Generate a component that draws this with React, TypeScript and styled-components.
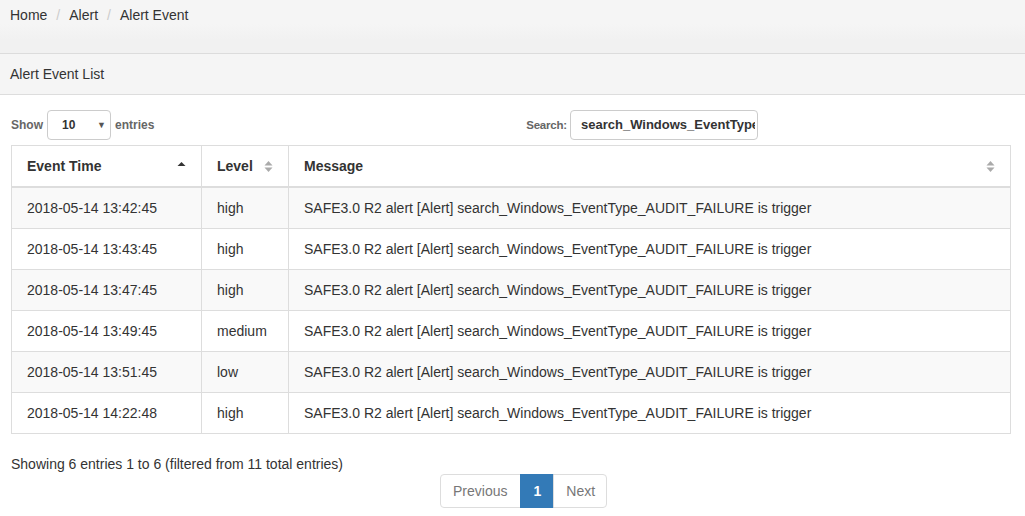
import React from "react";
import styled, { createGlobalStyle } from "styled-components";

const Global = createGlobalStyle`
  html, body { margin: 0; padding: 0; background: #fff; }
  body { font-family: "Liberation Sans", Arial, sans-serif; font-size: 14px; color: #333; line-height: 20px; }
  * { box-sizing: border-box; }
`;

const Top = styled.div`
  height: 54px;
  background: linear-gradient(#f5f5f5 0, #f5f5f5 24px, #f1f1f1 40px, #f1f1f1 100%);
  border-bottom: 1px solid #dcdcdc;
`;

const Crumbs = styled.ol`
  list-style: none;
  margin: 0;
  padding: 5px 10px;
  display: flex;
  line-height: 20px;
`;

const Crumb = styled.li<{ $first?: boolean }>`
  color: #333;
  &::before {
    content: ${(p) => (p.$first ? "none" : '"/"')};
    color: #ccc;
    padding: 0 9px 0 9px;
  }
`;

const PanelHeading = styled.div`
  background: #f5f5f5;
  border-bottom: 1px solid #ddd;
  padding: 10px 10px;
  line-height: 20px;
  height: 41px;
`;

const PanelBody = styled.div`
  padding: 15px 14px 0 11px;
`;

const Controls = styled.div`
  display: flex;
  align-items: center;
  height: 30px;
  margin-bottom: 5px;
`;

const Label = styled.label<{ $gap?: number }>`
  font-size: 12px;
  font-weight: bold;
  color: #666;
  display: flex;
  align-items: center;
  gap: ${(p) => p.$gap ?? 4}px;
`;

const SelectBox = styled.div`
  width: 64px;
  height: 30px;
  border: 1px solid #ccc;
  border-radius: 4px;
  display: flex;
  align-items: center;
  justify-content: space-between;
  padding: 0 4px 0 14px;
  color: #333;
  font-size: 12px;
  font-weight: bold;
`;

const Caret = styled.span`
  font-size: 9px;
  color: #555;
`;

const SearchGroup = styled.div`
  margin-left: auto;
  margin-right: 253px;
`;

const SearchLabelText = styled.span`
  font-size: 11.5px;
  letter-spacing: -0.2px;
`;

const SearchInput = styled.div`
  width: 188px;
  height: 30px;
  border: 1px solid #ccc;
  border-radius: 4px;
  padding: 0 2px 0 10px;
  font-size: 13px;
  font-weight: bold;
  color: #333;
  display: flex;
  align-items: center;
`;

const SearchText = styled.span`
  display: block;
  overflow: hidden;
  white-space: nowrap;
  width: 100%;
`;

const Table = styled.table`
  width: 1000px;
  border-collapse: collapse;
  table-layout: fixed;
  border: 1px solid #ddd;
`;

const Th = styled.th`
  text-align: left;
  font-weight: bold;
  padding: 10px 15px 9px 15px;
  border: 1px solid #ddd;
  border-bottom: 2px solid #ddd;
  height: 41px;
`;

const ThInner = styled.div`
  display: flex;
  align-items: center;
  justify-content: space-between;
`;

const Tr = styled.tr<{ $odd: boolean }>`
  background: ${(p) => (p.$odd ? "#f9f9f9" : "#fff")};
`;

const Td = styled.td`
  padding: 10px 15px;
  border: 1px solid #ddd;
  height: 41px;
  white-space: nowrap;
`;

const Info = styled.div`
  margin-top: 20px;
  line-height: 20px;
`;

const Pager = styled.ul`
  list-style: none;
  margin: 0 0 0 429px;
  padding: 0;
  display: flex;
`;

const PageItem = styled.li<{ $active?: boolean; $pos?: "first" | "last" }>`
  height: 34px;
  padding: 6px 12px;
  line-height: 20px;
  border: 1px solid ${(p) => (p.$active ? "#337ab7" : "#ddd")};
  background: ${(p) => (p.$active ? "#337ab7" : "#fff")};
  color: ${(p) => (p.$active ? "#fff" : "#777")};
  font-weight: ${(p) => (p.$active ? "bold" : "normal")};
  margin-left: ${(p) => (p.$pos === "first" ? "0" : "-1px")};
  border-radius: ${(p) =>
    p.$pos === "first" ? "4px 0 0 4px" : p.$pos === "last" ? "0 4px 4px 0" : "0"};
  ${(p) => (p.$pos === "first" ? "padding-right: 13px;" : "")}
  ${(p) => (p.$pos === "last" ? "padding-right: 11px;" : "")}
`;

const AscIcon = () => (
  <svg width="9" height="12" viewBox="0 0 9 12">
    <path d="M0.5 6 L4.5 2 L8.5 6 Z" fill="#333" />
  </svg>
);

const BothIcon = () => (
  <svg width="9" height="13" viewBox="0 0 9 13">
    <path d="M0.5 5.5 L4.5 1 L8.5 5.5 Z" fill="#aaa" />
    <path d="M0.5 7.5 L4.5 12 L8.5 7.5 Z" fill="#aaa" />
  </svg>
);

const rows = [
  ["2018-05-14 13:42:45", "high"],
  ["2018-05-14 13:43:45", "high"],
  ["2018-05-14 13:47:45", "high"],
  ["2018-05-14 13:49:45", "medium"],
  ["2018-05-14 13:51:45", "low"],
  ["2018-05-14 14:22:48", "high"],
];

const msg = "SAFE3.0 R2 alert [Alert] search_Windows_EventType_AUDIT_FAILURE is trigger";

export default function App() {
  return (
    <>
      <Global />
      <Top>
        <Crumbs>
          <Crumb $first>Home</Crumb>
          <Crumb>Alert</Crumb>
          <Crumb>Alert Event</Crumb>
        </Crumbs>
      </Top>
      <PanelHeading>Alert Event List</PanelHeading>
      <PanelBody>
        <Controls>
          <Label>
            Show
            <SelectBox>
              10 <Caret>▼</Caret>
            </SelectBox>
            entries
          </Label>
          <SearchGroup>
            <Label $gap={3}>
              <SearchLabelText>Search:</SearchLabelText>
              <SearchInput>
                <SearchText>search_Windows_EventType_AUDIT_FAILURE</SearchText>
              </SearchInput>
            </Label>
          </SearchGroup>
        </Controls>
        <Table>
          <colgroup>
            <col style={{ width: 190 }} />
            <col style={{ width: 87 }} />
            <col />
          </colgroup>
          <thead>
            <tr>
              <Th>
                <ThInner>
                  Event Time <AscIcon />
                </ThInner>
              </Th>
              <Th>
                <ThInner>
                  Level <BothIcon />
                </ThInner>
              </Th>
              <Th>
                <ThInner>
                  Message <BothIcon />
                </ThInner>
              </Th>
            </tr>
          </thead>
          <tbody>
            {rows.map((r, i) => (
              <Tr key={i} $odd={i % 2 === 0}>
                <Td>{r[0]}</Td>
                <Td>{r[1]}</Td>
                <Td>{msg}</Td>
              </Tr>
            ))}
          </tbody>
        </Table>
        <Info>Showing 6 entries 1 to 6 (filtered from 11 total entries)</Info>
        <Pager>
          <PageItem $pos="first">Previous</PageItem>
          <PageItem $active>1</PageItem>
          <PageItem $pos="last">Next</PageItem>
        </Pager>
      </PanelBody>
    </>
  );
}
